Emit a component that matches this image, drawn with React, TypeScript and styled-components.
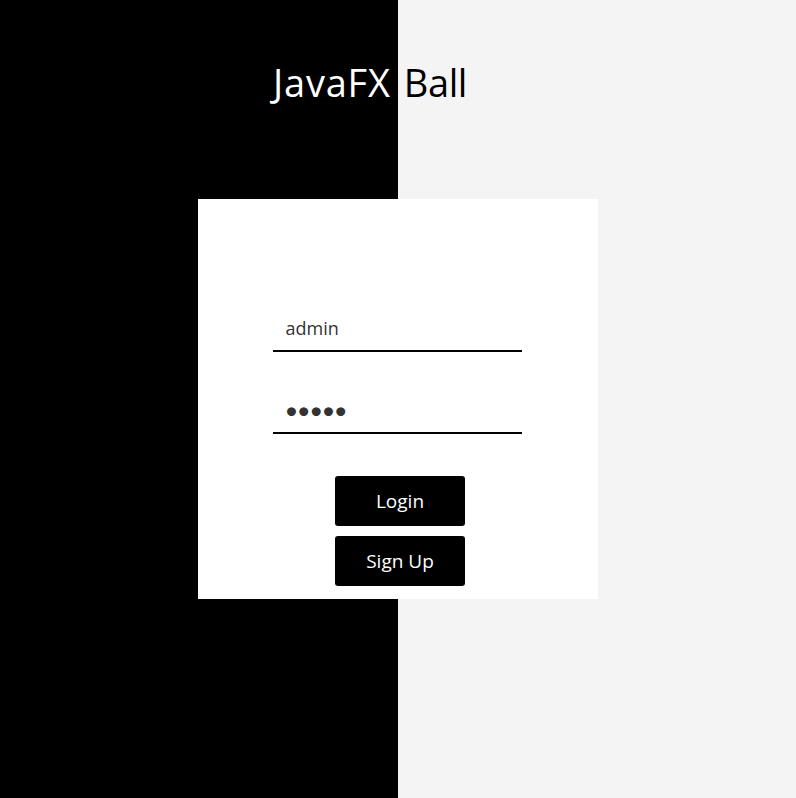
import React from 'react';
import styled, { createGlobalStyle } from 'styled-components';

const GlobalStyle = createGlobalStyle`
  html, body {
    margin: 0;
    padding: 0;
  }
  body {
    font-family: 'Open Sans', 'Noto Sans', sans-serif;
  }
`;

const Page = styled.main`
  min-height: 798px;
  width: 100%;
  display: flex;
  flex-direction: column;
  align-items: center;
  background: linear-gradient(to right, #000 0, #000 50%, #f4f4f4 50%, #f4f4f4 100%);
`;

const Header = styled.header`
  height: 199px;
  width: 250px;
  box-sizing: border-box;
  padding-top: 56px;
`;

const Title = styled.h1`
  margin: 0;
  display: flex;
  gap: 13px;
  font-size: 38px;
  font-weight: 400;
  line-height: 52px;
  white-space: nowrap;
`;

const TitlePart = styled.span<{ dark?: boolean }>`
  color: ${props => (props.dark ? '#000' : '#fff')};
  letter-spacing: ${props => (props.dark ? '-0.4px' : '0.8px')};
`;

const Card = styled.form`
  width: 400px;
  height: 400px;
  box-sizing: border-box;
  padding-top: 111px;
  background: #fff;
  display: flex;
  flex-direction: column;
  align-items: center;
`;

const Field = styled.input`
  width: 249px;
  height: 42px;
  box-sizing: border-box;
  margin: 0 2px 40px 0;
  padding: 0 13px 4px;
  border: 0;
  border-bottom: 2px solid #000;
  outline: none;
  background: transparent;
  color: #333;
  font-family: 'Open Sans', 'Noto Sans', sans-serif;
  font-size: 18px;
  &[type='password'] {
    padding: 0 13px 5px 12px;
    font-family: 'Lato', 'Open Sans', sans-serif;
    font-size: 24px;
    letter-spacing: -1.6px;
    margin-bottom: 42px;
  }
`;

const Actions = styled.div`
  display: flex;
  flex-direction: column;
  gap: 10px;
  margin-left: 4px;
`;

const Button = styled.button`
  width: 130px;
  height: 50px;
  padding: 0;
  border: 0;
  border-radius: 3px;
  background: #000;
  color: #fff;
  font-family: 'Open Sans', 'Noto Sans', sans-serif;
  font-size: 19px;
  cursor: pointer;
`;

const App = () => (
  <>
    <GlobalStyle />
    <Page>
      <Header>
        <Title>
          <TitlePart>JavaFX</TitlePart> <TitlePart dark>Ball</TitlePart>
        </Title>
      </Header>
      <Card onSubmit={e => e.preventDefault()}>
        <Field type="text" defaultValue="admin" />
        <Field type="password" defaultValue="admin" />
        <Actions>
          <Button type="submit">Login</Button>
          <Button type="button">Sign Up</Button>
        </Actions>
      </Card>
    </Page>
  </>
);

export default App;
